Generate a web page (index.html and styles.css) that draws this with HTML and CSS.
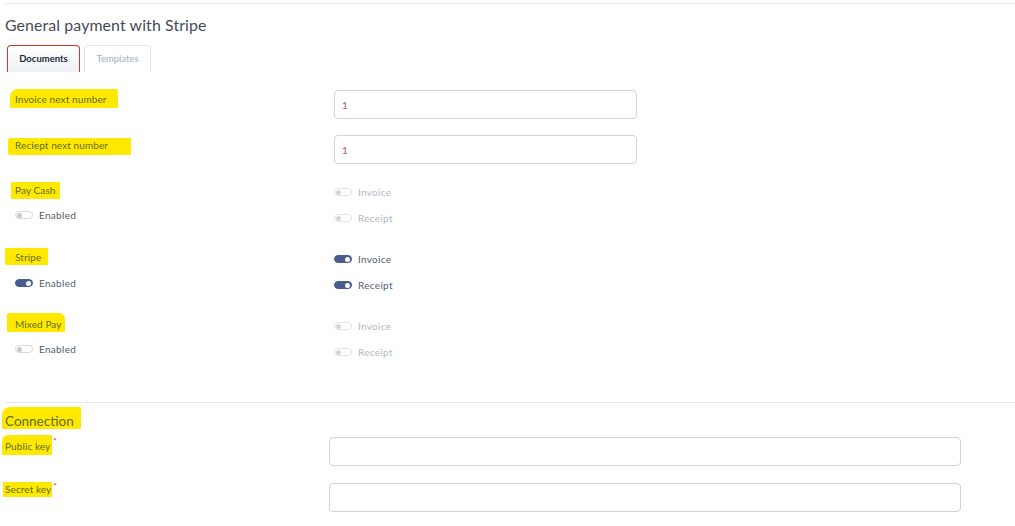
FILE: index.html
```html
<!DOCTYPE html>
<html>
<head>
<meta charset="utf-8">
<link rel="stylesheet" href="styles.css">
</head>
<body>
<div class="page">
  <div class="topline"></div>
  <h2 class="title">General payment with Stripe</h2>
  <div class="tabs">
    <div class="tab active">Documents</div>
    <div class="tab">Templates</div>
  </div>

  <div class="docs">
    <div class="row field">
      <div class="left"><span class="hl hl-1">Invoice next number</span></div>
      <div class="right"><input class="input short" value="1"></div>
    </div>
    <div class="row field">
      <div class="left"><span class="hl hl-2">Reciept next number</span></div>
      <div class="right"><input class="input short" value="1"></div>
    </div>

    <div class="row group">
      <div class="left">
        <span class="hl hl-3">Pay Cash</span>
        <div class="switch-line en-3"><span class="toggle"></span><span class="sw-label">Enabled</span></div>
      </div>
      <div class="right opts">
        <div class="switch-line dis"><span class="toggle"></span><span class="sw-label">Invoice</span></div>
        <div class="switch-line dis"><span class="toggle"></span><span class="sw-label">Receipt</span></div>
      </div>
    </div>

    <div class="row group">
      <div class="left">
        <span class="hl hl-4">Stripe</span>
        <div class="switch-line en-4"><span class="toggle on"></span><span class="sw-label">Enabled</span></div>
      </div>
      <div class="right opts">
        <div class="switch-line"><span class="toggle on"></span><span class="sw-label">Invoice</span></div>
        <div class="switch-line"><span class="toggle on"></span><span class="sw-label">Receipt</span></div>
      </div>
    </div>

    <div class="row group">
      <div class="left">
        <span class="hl hl-5">Mixed Pay</span>
        <div class="switch-line en-5"><span class="toggle"></span><span class="sw-label">Enabled</span></div>
      </div>
      <div class="right opts">
        <div class="switch-line dis"><span class="toggle"></span><span class="sw-label">Invoice</span></div>
        <div class="switch-line dis"><span class="toggle"></span><span class="sw-label">Receipt</span></div>
      </div>
    </div>
  </div>

  <div class="divider"></div>

  <div class="conn">
    <div class="conn-title"><span class="hl hl-6">Connection</span></div>
    <div class="row key key-1">
      <div class="left"><div class="lbl"><span class="hl hl-7">Public key</span><span class="req">*</span></div></div>
      <div class="right"><input class="input long"></div>
    </div>
    <div class="row key key-2">
      <div class="left"><div class="lbl"><span class="hl hl-8">Secret key</span><span class="req">*</span></div></div>
      <div class="right"><input class="input long"></div>
    </div>
  </div>
</div>
</body>
</html>
```

FILE: styles.css
```css
* { box-sizing: border-box; }
html, body { margin: 0; padding: 0; background: #fff; }
body {
  font-family: "Lato", "Noto Sans", sans-serif;
  color: #4b5563;
  width: 1015px;
  height: 526px;
  overflow: hidden;
}
.page { padding-top: 3px; }
.topline {
  margin-left: 5px;
  border-top: 1px solid #e6e7ea;
}
.title {
  margin: 0;
  padding: 12px 0 0 5px;
  height: 41px;
  font-size: 15.9px;
  font-weight: 400;
  line-height: 18px;
  color: #444a57;
  letter-spacing: 0.1px;
}
.tabs {
  display: flex;
  gap: 4px;
  padding-left: 7px;
  height: 27px;
}
.tab {
  height: 27px;
  padding: 0 6px;
  font-size: 9.5px;
  line-height: 25px;
  border: 1px solid #e1e4e9;
  border-bottom: none;
  border-radius: 4px 4px 0 0;
  color: #a3adbd;
  text-align: center;
}
.tab:first-child { width: 73px; }
.tab:last-child { width: 67px; }
.tab.active {
  border: 1.5px solid #d7352d;
  border-bottom: none;
  background: linear-gradient(#ffffff, #eef0f4);
  color: #1f2937;
  font-weight: 700;
}

.docs { padding: 17px 0 0 15px; }
.row { display: flex; }
.left {
  width: 319px;
  flex: none;
  display: flex;
  flex-direction: column;
  align-items: flex-start;
}
.field { height: 45px; }
.field .right { padding-top: 1px; }

.hl {
  display: block;
  background: #ffe900;
  color: #646c22;
  font-size: 10px;
  line-height: 15px;
  letter-spacing: 0.1px;
  white-space: nowrap;
}
.hl-1 { margin-left: -5px; padding: 3px 11px 1px 5px; border-radius: 8px 2px 1px 1px; }
.hl-2 { margin: 4px 0 0 -7px; padding: 0 23px 2px 7px; border-radius: 3px 1px 1px 2px; }
.hl-3 { margin: 3px 0 0 -4px; padding: 1px 4px 1px 4px; }
.hl-4 { margin: 2px 0 0 -10px; padding: 2px 7px 0 10px; }
.hl-5 { margin: 0 0 0 -8px; padding: 4px 3px 0 8px; border-radius: 2px 6px 1px 1px; }
.hl-6 { margin: 4px 0 0 -3px; padding: 7px 7px 0 3px; font-size: 13.5px; line-height: 15px; letter-spacing: 0; border-radius: 8px 1px 1px 1px; display: inline-block; }
.hl-7 { margin-left: -3px; padding: 4px 2px 1px 3px; border-radius: 6px 1px 1px 1px; }
.hl-8 { margin-left: -2px; padding: 0 1px 0 2px; }

.input {
  display: block;
  height: 29px;
  border: 1px solid #cfd3da;
  border-radius: 4px;
  background: #fff;
  font-family: "Lato", "Noto Sans", sans-serif;
  font-size: 10px;
  color: #a0605e;
  padding: 0 7px;
  outline: none;
}
.input.short { width: 303px; }
.input.long { width: 632px; }

.group { height: 67px; }
.switch-line {
  display: flex;
  align-items: center;
  height: 16px;
  gap: 6px;
}
.en-3 { margin-top: 8px; }
.en-4 { margin-top: 10px; }
.en-5 { margin-top: 9px; }
.opts { padding-top: 5px; }
.opts .switch-line + .switch-line { margin-top: 10px; }
.toggle {
  position: relative;
  width: 18px;
  height: 8px;
  border: 1px solid #d9d9dc;
  border-radius: 5px;
  background: #fff;
  flex: none;
}
.toggle::after {
  content: "";
  position: absolute;
  left: 1px;
  top: 0.5px;
  width: 5px;
  height: 5px;
  border-radius: 50%;
  background: #c9c9cc;
}
.toggle.on {
  background: #4a5c8f;
  border-color: #4a5c8f;
}
.toggle.on::after {
  left: auto;
  right: 1px;
  background: #fff;
}
.sw-label {
  font-size: 10px;
  letter-spacing: 0.3px;
  color: #555c6a;
}
.dis .sw-label { color: #b4b7bd; }
.dis .toggle { border-color: #e2e3e5; }
.dis .toggle::after { background: #d6d6d8; }

.divider {
  margin: 22px 0 0 5px;
  border-top: 1px solid #e6e7ea;
}
.conn { padding-left: 5px; }
.conn-title { height: 32px; }
.conn .left { width: 324px; }
.lbl { display: flex; align-items: flex-start; }
.key-1 { height: 47px; }
.key-1 .right { padding-top: 2px; }
.key-2 .right { padding-top: 1px; }
.req {
  color: #e0245e;
  font-size: 8px;
  line-height: 8px;
  margin-left: 1px;
}
.key-1 .req { margin-top: 2px; }
.key-2 .req { margin-top: 0; }
```
